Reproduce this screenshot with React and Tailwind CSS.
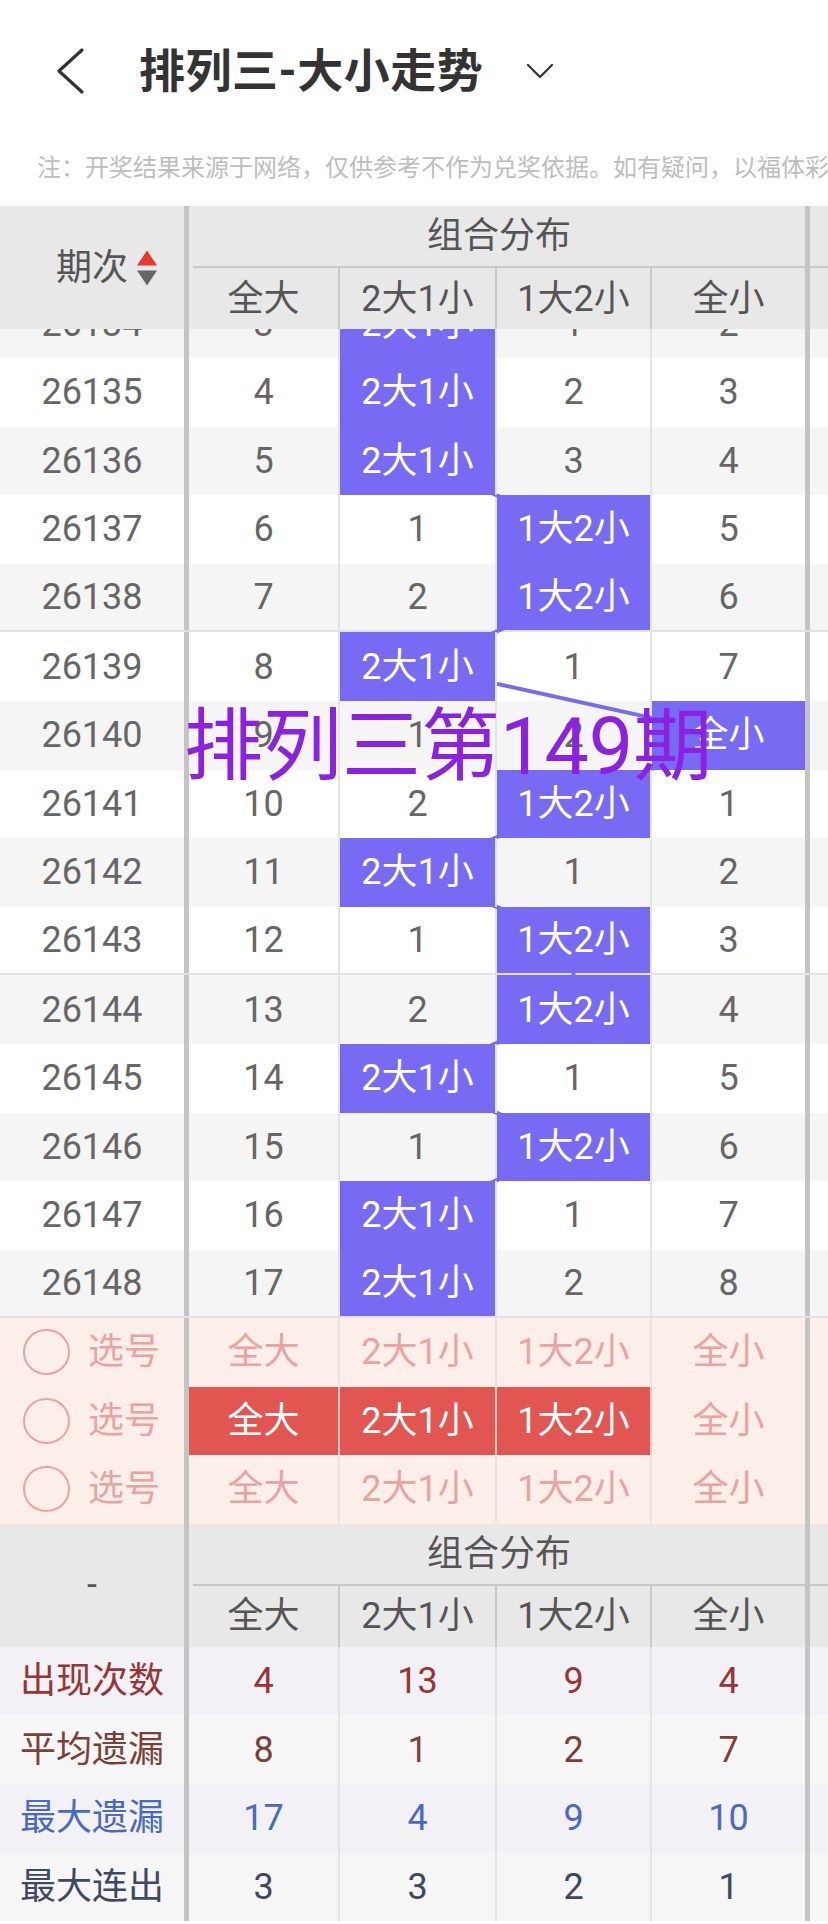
import React from 'react'

const FONT = { fontFamily: "Roboto, 'Noto Sans CJK SC', sans-serif" }
const LABELS = ['全大', '2大1小', '1大2小', '全小']

// widths of the four columns inside 组合分布 (last one has no divider)
const COLS = [
  'w-[151px] border-r-2 border-[#e4e4e4]',
  'w-[157px] border-r-2 border-[#e4e4e4]',
  'w-[155px] border-r-2 border-[#e4e4e4]',
  'w-[153px]',
]
const HEAD_COLS = [
  'w-[151px] border-r-2 border-[#c9c9c9]',
  'w-[157px] border-r-2 border-[#c9c9c9]',
  'w-[155px] border-r-2 border-[#c9c9c9]',
  'w-[153px]',
]
const CENTERS = [263.5, 417.5, 573.5, 728.5]
const ROW = 68.6

const rows = [
  ['26134', [3, 0, 1, 2], 1],
  ['26135', [4, 0, 2, 3], 1],
  ['26136', [5, 0, 3, 4], 1],
  ['26137', [6, 1, 0, 5], 2],
  ['26138', [7, 2, 0, 6], 2],
  ['26139', [8, 0, 1, 7], 1],
  ['26140', [9, 1, 2, 0], 3],
  ['26141', [10, 2, 0, 1], 2],
  ['26142', [11, 0, 1, 2], 1],
  ['26143', [12, 1, 0, 3], 2],
  ['26144', [13, 2, 0, 4], 2],
  ['26145', [14, 0, 1, 5], 1],
  ['26146', [15, 1, 0, 6], 2],
  ['26147', [16, 0, 1, 7], 1],
  ['26148', [17, 0, 2, 8], 1],
]

const picks = [
  [false, false, false, false],
  [true, true, true, false],
  [false, false, false, false],
]

const stats = [
  { label: '出现次数', vals: [4, 13, 9, 4], color: 'text-[#9a3434]', bg: 'bg-[#f1f1f6]' },
  { label: '平均遗漏', vals: [8, 1, 2, 7], color: 'text-[#7d4039]', bg: 'bg-[#f6f6f6]' },
  { label: '最大遗漏', vals: [17, 4, 9, 10], color: 'text-[#4a69c2]', bg: 'bg-[#f1f1f6]' },
  { label: '最大连出', vals: [3, 3, 2, 1], color: 'text-[#3e4862]', bg: 'bg-[#f6f6f6]' },
]

function GroupHeader({ left }) {
  return (
    <div className="flex h-[123px] bg-[#e8e8e8] text-[36px] text-[#555]">
      <div className="w-[189px] shrink-0 border-r-[5px] border-[#c4c4c4] flex items-center justify-center">
        {left}
      </div>
      <div className="w-[616px] shrink-0 flex flex-col">
        <div className="h-[62px] flex items-center justify-center border-b-2 border-[#c9c9c9] ml-[4px]">组合分布</div>
        <div className="flex-1 flex">
          {LABELS.map((l, i) => (
            <div key={l} className={`${HEAD_COLS[i]} flex items-center justify-center`}>{l}</div>
          ))}
        </div>
      </div>
      <div className="flex-1 border-l-[5px] border-[#c4c4c4]">
        <div className="h-[62px] border-b-2 border-[#c9c9c9]" />
      </div>
    </div>
  )
}

export default function App() {
  const points = rows.map(([, , hit], i) => `${CENTERS[hit]},${i * ROW + ROW / 2}`).join(' ')

  return (
    <div className="relative w-[828px] h-[1924px] overflow-hidden bg-white" style={FONT}>
      {/* nav */}
      <div className="h-[142px] flex items-center pl-[54px]">
        <svg width="32" height="48" viewBox="0 0 32 48" fill="none">
          <polyline points="28,3 5,24 28,45" stroke="#333" strokeWidth="3.2" strokeLinecap="round" strokeLinejoin="round" />
        </svg>
        <div className="ml-[53px] text-[46px] font-bold text-[#333] tracking-[0.5px]">排列三-大小走势</div>
        <svg className="ml-[42px]" width="30" height="18" viewBox="0 0 30 18" fill="none">
          <polyline points="3,3 15,15 27,3" stroke="#333" strokeWidth="2.2" strokeLinecap="round" strokeLinejoin="round" />
        </svg>
      </div>

      <div className="h-[52px] mb-[12px] flex items-center pl-[37px] text-[24px] text-[#bdbdbd] whitespace-nowrap overflow-hidden">
        注：开奖结果来源于网络，仅供参考不作为兑奖依据。如有疑问，以福体彩中心公布为准。
      </div>

      <GroupHeader
        left={
          <span className="relative">
            期次
            <span className="absolute left-full top-1/2 -translate-y-1/2 ml-[9px] flex flex-col gap-[5px]">
              <span className="block w-0 h-0 border-l-[10px] border-r-[10px] border-b-[15px] border-l-transparent border-r-transparent border-b-[#e8382f]" />
              <span className="block w-0 h-0 border-l-[10px] border-r-[10px] border-t-[15px] border-l-transparent border-r-transparent border-t-[#666]" />
            </span>
          </span>
        }
      />

      {/* body, scrolled so 26134 is half hidden */}
      <div className="h-[989px] overflow-hidden">
        <div className="relative -mt-[39.6px]">
          <svg className="absolute left-0 top-0 z-10 pointer-events-none" width="828" height={rows.length * ROW}>
            <polyline points={points} fill="none" stroke="#776bf3" strokeWidth="4" />
          </svg>
          {rows.map(([issue, vals, hit], i) => (
            <div
              key={issue}
              className={`flex h-[68.6px] text-[36px] text-[#666] ${i % 2 === 0 ? 'bg-[#f5f5f5]' : 'bg-white'} ${i % 5 === 4 ? 'border-b-2 border-[#e2e2e2]' : ''}`}
            >
              <div className="w-[189px] shrink-0 border-r-[5px] border-[#c4c4c4] flex items-center justify-center">{issue}</div>
              {vals.map((v, c) =>
                c === hit ? (
                  <div key={c} className={`${COLS[c]} relative z-20 bg-[#776bf3] text-white flex items-center justify-center`}>
                    {LABELS[c]}
                  </div>
                ) : (
                  <div key={c} className={`${COLS[c]} flex items-center justify-center`}>{v}</div>
                )
              )}
              <div className="flex-1 border-l-[5px] border-[#c4c4c4]" />
            </div>
          ))}
        </div>
      </div>

      {/* pick rows */}
      {picks.map((sel, r) => (
        <div key={r} className="flex h-[68.6px] bg-[#fcefea] text-[36px] text-[#e9a3a3]">
          <div className="w-[189px] shrink-0 border-r-[5px] border-[#c4c4c4] flex items-center pl-[23px] gap-[18px]">
            <span className="w-[47px] h-[46px] rounded-full border-2 border-[#e9a3a3]" />
            <span>选号</span>
          </div>
          {LABELS.map((l, c) => (
            <div
              key={l}
              className={`${COLS[c]} flex items-center justify-center ${sel[c] ? 'bg-[#e15651] text-white !border-[#f3c9c5]' : ''}`}
            >
              {l}
            </div>
          ))}
          <div className="flex-1 border-l-[5px] border-[#c4c4c4]" />
        </div>
      ))}

      <GroupHeader left={<span className="text-[#555]">-</span>} />

      {stats.map((s) => (
        <div key={s.label} className={`flex h-[68.6px] text-[36px] ${s.bg} ${s.color}`}>
          <div className="w-[189px] shrink-0 border-r-[5px] border-[#c4c4c4] flex items-center justify-center">{s.label}</div>
          {s.vals.map((v, c) => (
            <div key={c} className={`${COLS[c]} flex items-center justify-center`}>{v}</div>
          ))}
          <div className="flex-1 border-l-[5px] border-[#c4c4c4]" />
        </div>
      ))}

      {/* watermark */}
      <div className="absolute left-[184px] top-[708px] z-30 text-[79px] leading-none text-[#8a22e0] whitespace-nowrap pointer-events-none">
        排列三第149期
      </div>
    </div>
  )
}
